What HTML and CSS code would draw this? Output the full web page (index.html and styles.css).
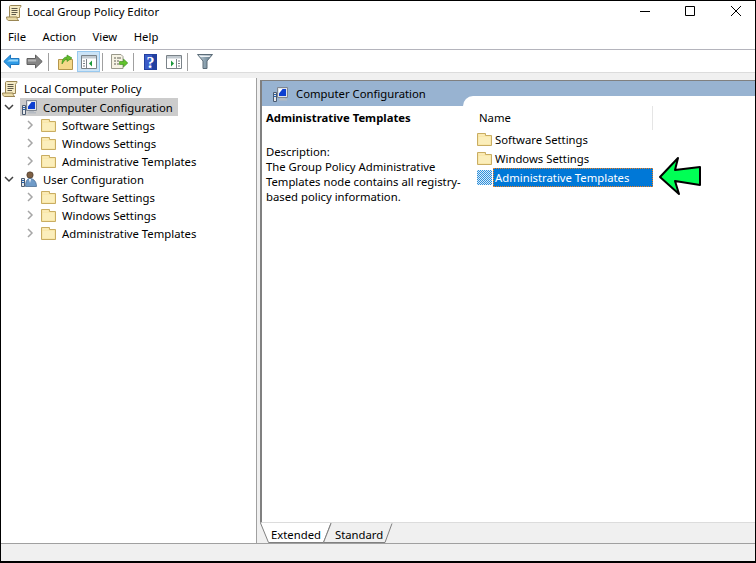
FILE: index.html
```html
<!DOCTYPE html>
<html lang="en">
<head>
<meta charset="utf-8">
<title>Local Group Policy Editor</title>
<link rel="stylesheet" href="styles.css">
</head>
<body>
<svg class="defs" width="0" height="0" aria-hidden="true">
  <defs>
    <linearGradient id="filter-grad" x1="0" y1="0" x2="1" y2="0">
      <stop offset="0" stop-color="#c8d4dc"/>
      <stop offset=".5" stop-color="#8aa0ae"/>
      <stop offset="1" stop-color="#5f7686"/>
    </linearGradient>
    <symbol id="folder" viewBox="0 0 15 15">
      <path d="M.5 13.500V1.500H8.500V3.500H14.500V13.500Z" fill="#f8e29c" stroke="#c9ad62"/>
      <path d="M1.500 4.500H13.500V12.500H1.500Z" fill="#fbeebb"/>
      <path d="M1.500 2.500H7.500V3.500H1.500Z" fill="#fdf3cc"/>
    </symbol>
    <symbol id="scroll" viewBox="0 0 16 16">
      <path d="M4.500 .5H15C15 2.500 13.500 2.500 13.500 3.500V12.500H3.500V1.500C3.500 1 4 .5 4.500 .5Z" fill="#f6ebc4" stroke="#9a8654"/>
      <path d="M.5 12H11C11 14 12 15.500 13 15.500H2.500C1.500 15.500 .5 14 .5 12Z" fill="#eadba6" stroke="#9a8654"/>
      <path d="M5.500 3.500H11.500M5.500 5.500H11.500M5.500 7.500H11.500M5.500 9.500H10" stroke="#5f5a4a"/>
    </symbol>
    <symbol id="computer" viewBox="0 0 16 16">
      <path d="M5.500 1.500H15.500V11.500H5.500Z" fill="#dfe3e8" stroke="#7f8690"/>
      <path d="M7 3H14V10H7Z" fill="#0d3fd0"/>
      <path d="M7 3H10.500L7 7.500Z" fill="#fff"/>
      <path d="M8 12H13V13H15V14.500H7V13H8Z" fill="#b4bac2"/>
      <path d="M1.500 6.500H4.500V15.500H1.500Z" fill="#e6e9ec" stroke="#4a5a70"/>
      <path d="M2 8.500H4M2 10.500H4" stroke="#1e5fb0"/>
    </symbol>
    <symbol id="user" viewBox="0 0 16 16">
      <circle cx="9" cy="4" r="3.200" fill="#7d5f44" stroke="#3f3226" stroke-width=".6"/>
      <path d="M4.500 15.500C4.500 9.500 6.500 7.500 9 7.500S15.500 9.500 15.500 15.500Z" fill="#6f9bc8" stroke="#3f6288" stroke-width=".7"/>
      <path d="M8 8L9 12L10 8Z" fill="#fff"/>
      <path d="M.5 7.500H3.500V15.500H.5Z" fill="#e6e9ec" stroke="#4a5a70"/>
      <path d="M1 9.500H3M1 11.500H3" stroke="#1e5fb0"/>
    </symbol>
    <symbol id="chev-down" viewBox="0 0 10 10">
      <path d="M1 3L5 7L9 3" fill="none" stroke="#404040" stroke-width="1.500"/>
    </symbol>
    <symbol id="chev-right" viewBox="0 0 10 10">
      <path d="M3 1L7 5L3 9" fill="none" stroke="#a6a6a6" stroke-width="1.500"/>
    </symbol>
    <pattern id="dither" width="2" height="2" patternUnits="userSpaceOnUse">
      <rect width="2" height="2" fill="#2f8fdc"/>
      <rect width="1" height="1" fill="#d8ecf8"/>
      <rect x="1" y="1" width="1" height="1" fill="#d8ecf8"/>
    </pattern>
  </defs>
</svg>

<div class="window">
  <header class="titlebar">
    <svg class="icon16" width="16" height="16"><use href="#scroll"/></svg>
    <span class="title-text">Local Group Policy Editor</span>
    <div class="win-controls">
      <svg width="46" height="22" viewBox="0 0 46 22"><path d="M19 10.500H29" stroke="#000"/></svg>
      <svg width="46" height="22" viewBox="0 0 46 22"><path d="M18.500 5.500H27.500V14.500H18.500Z" fill="none" stroke="#000"/></svg>
      <svg width="42" height="22" viewBox="0 0 42 22"><path d="M18 5L28 15M28 5L18 15" stroke="#000"/></svg>
    </div>
  </header>

  <nav class="menubar">
    <span class="menu-item">File</span>
    <span class="menu-item">Action</span>
    <span class="menu-item">View</span>
    <span class="menu-item">Help</span>
  </nav>

  <div class="toolbar">
    <span class="tool tool-first">
      <svg width="17" height="15" viewBox="0 0 17 15"><path d="M.8 7.500L7.500 1V4.500H16V10.500H7.500V14Z" fill="#2f9be6" stroke="#1f78c0"/><path d="M7 5.500H15V7.500H4Z" fill="#9ad8fa"/></svg>
    </span>
    <span class="tool tool-second">
      <svg width="17" height="15" viewBox="0 0 17 15"><path d="M16.200 7.500L9.500 1V4.500H1V10.500H9.500V14Z" fill="#858585" stroke="#606060"/><path d="M2 5.500H10V7.500H2Z" fill="#b4b4b4"/></svg>
    </span>
    <span class="tool-sep"></span>
    <span class="tool">
      <svg width="15" height="16" viewBox="0 0 15 16"><path d="M.5 15.500V5.500H14.500V15.500Z" fill="#f5d98a" stroke="#b4964c"/><path d="M4 10C4 5 6 3 9 3V1L14 4L9 7.500V5C7.500 5 6 7 4 10Z" fill="#62bc2c" stroke="#3a8a1c" stroke-width=".6"/></svg>
    </span>
    <span class="tool tool-active">
      <svg width="16" height="14" viewBox="0 0 16 14"><path d="M.5.500H15.500V13.500H.5Z" fill="#fff" stroke="#7a8288"/><path d="M1 1H15V3.500H1Z" fill="#c2cad0"/><path d="M5.500 4V13" stroke="#7a8288"/><path d="M2 6H4M2 8.500H4M2 11H4" stroke="#7a8288"/><path d="M11 5.500V11.500L8 8.500Z" fill="#1c9a3c"/></svg>
    </span>
    <span class="tool-sep"></span>
    <span class="tool">
      <svg width="17" height="15" viewBox="0 0 17 15"><path d="M.5.500H10L12 2.500V14.500H.5Z" fill="#f6f3e4" stroke="#9a9a8c"/><path d="M3 4H5M6 4H10M3 7H5M6 7H8M3 10H5M6 10H8" stroke="#5f5f55"/><path d="M8.500 7.500H12.500V5L16.800 9L12.500 13V10.500H8.500Z" fill="#62c42c" stroke="#3a8a1c" stroke-width=".6"/></svg>
    </span>
    <span class="tool-sep"></span>
    <span class="tool">
      <svg width="13" height="16" viewBox="0 0 13 16"><path d="M0 0H13V16H0Z" fill="#22409f"/><path d="M1 1H8V15H1Z" fill="#3a5cc8"/><text class="help-glyph" x="6.500" y="13.500" text-anchor="middle">?</text></svg>
    </span>
    <span class="tool">
      <svg width="16" height="14" viewBox="0 0 16 14"><path d="M.5.500H15.500V13.500H.5Z" fill="#fff" stroke="#7a8288"/><path d="M1 1H15V3.500H1Z" fill="#c2cad0"/><path d="M10.500 4V13" stroke="#7a8288"/><path d="M12 6H14M12 8.500H14M12 11H14" stroke="#7a8288"/><path d="M5 5.500V11.500L8 8.500Z" fill="#1c9a3c"/></svg>
    </span>
    <span class="tool-sep"></span>
    <span class="tool">
      <svg width="16" height="15" viewBox="0 0 16 15"><path d="M.5.500H15.500L10 7V14.500H6V7Z" fill="url(#filter-grad)" stroke="#5c6c78"/><path d="M2 1.500H14L12.500 3H3.500Z" fill="#eef2f5"/></svg>
    </span>
  </div>

  <main class="panes">
    <aside class="tree">
      <div class="tree-row">
        <svg class="root-icon" width="16" height="16"><use href="#scroll"/></svg>
        <span class="root-label">Local Computer Policy</span>
      </div>
      <div class="tree-row lvl1">
        <svg class="chev" width="10" height="10"><use href="#chev-down"/></svg>
        <span class="node node-selected">
          <svg width="16" height="16"><use href="#computer"/></svg>
          <span>Computer Configuration</span>
        </span>
      </div>
      <div class="tree-row lvl2"><svg class="chev" width="10" height="10"><use href="#chev-right"/></svg><svg class="folder" width="15" height="15"><use href="#folder"/></svg><span>Software Settings</span></div>
      <div class="tree-row lvl2"><svg class="chev" width="10" height="10"><use href="#chev-right"/></svg><svg class="folder" width="15" height="15"><use href="#folder"/></svg><span>Windows Settings</span></div>
      <div class="tree-row lvl2"><svg class="chev" width="10" height="10"><use href="#chev-right"/></svg><svg class="folder" width="15" height="15"><use href="#folder"/></svg><span>Administrative Templates</span></div>
      <div class="tree-row lvl1">
        <svg class="chev" width="10" height="10"><use href="#chev-down"/></svg>
        <span class="node">
          <svg width="16" height="16"><use href="#user"/></svg>
          <span>User Configuration</span>
        </span>
      </div>
      <div class="tree-row lvl2"><svg class="chev" width="10" height="10"><use href="#chev-right"/></svg><svg class="folder" width="15" height="15"><use href="#folder"/></svg><span>Software Settings</span></div>
      <div class="tree-row lvl2"><svg class="chev" width="10" height="10"><use href="#chev-right"/></svg><svg class="folder" width="15" height="15"><use href="#folder"/></svg><span>Windows Settings</span></div>
      <div class="tree-row lvl2"><svg class="chev" width="10" height="10"><use href="#chev-right"/></svg><svg class="folder" width="15" height="15"><use href="#folder"/></svg><span>Administrative Templates</span></div>
    </aside>

    <section class="detail">
      <div class="detail-body">
        <div class="detail-left">
          <div class="band">
            <svg width="16" height="16"><use href="#computer"/></svg>
            <span>Computer Configuration</span>
          </div>
          <div class="desc">
            <h2 class="desc-title">Administrative Templates</h2>
            <p class="desc-text">Description:<br>The Group Policy Administrative<br>Templates node contains all registry-<br>based policy information.</p>
          </div>
        </div>
        <div class="detail-list">
          <div class="col-head"><span class="col-name">Name</span></div>
          <div class="list-row"><svg width="15" height="15"><use href="#folder"/></svg><span class="list-label">Software Settings</span></div>
          <div class="list-row"><svg width="15" height="15"><use href="#folder"/></svg><span class="list-label">Windows Settings</span></div>
          <div class="list-row"><svg width="15" height="15"><rect width="15" height="15" fill="url(#dither)"/></svg><span class="list-label list-selected">Administrative Templates</span></div>
        </div>
      </div>
      <div class="tabs">
        <svg class="tab-shape" width="140" height="21" viewBox="0 0 140 21">
          <path d="M.5 0L8.500 19.500H63.500L71 0" fill="#fff" stroke="#808080"/>
          <path d="M71 .5L63.500 19.500H125L132 .5" fill="#f0f0f0" stroke="#808080"/>
        </svg>
        <span class="tab tab-ext">Extended</span>
        <span class="tab tab-std">Standard</span>
      </div>
    </section>
  </main>

  <footer class="statusbar"></footer>

  <svg class="callout" width="44" height="40" viewBox="0 0 44 40">
    <path d="M2 21L20 2L17 14L42 11V29L17 25L21 38Z" fill="#00ff55" stroke="#000" stroke-width="2" stroke-linejoin="round"/>
  </svg>
</div>
</body>
</html>
```
FILE: styles.css
```css
* { box-sizing: border-box; }
html, body { margin: 0; padding: 0; }
body {
  width: 756px;
  height: 563px;
  overflow: hidden;
  font-family: "Noto Sans", "Open Sans", sans-serif;
  font-size: 11.3px;
  color: #000;
  background: #fff;
}
.defs { position: absolute; }
svg { display: block; flex: none; }

.window {
  position: relative;
  display: flex;
  flex-direction: column;
  width: 756px;
  height: 563px;
  border: 1px solid #000;
  border-bottom-width: 2px;
  background: #f0f0f0;
}

.titlebar {
  display: flex;
  align-items: center;
  height: 23px;
  padding-left: 5px;
  background: #fff;
}
.title-text { margin: -2px 0 0 5px; }
.win-controls { display: flex; align-self: flex-start; margin-left: auto; }

.menubar {
  display: flex;
  align-items: center;
  height: 26px;
  padding: 0 0 0 7px;
  gap: 16.5px;
  background: #fff;
  border-bottom: 1px solid #b4b4bc;
}

.toolbar {
  display: flex;
  align-items: center;
  height: 23px;
  padding-top: 1px;
  background: #fff;
  border-bottom: 1px solid #dcdcdc;
}
.tool {
  display: flex;
  align-items: center;
  justify-content: center;
  width: 23px;
  height: 21px;
}
.tool-first { width: 21px; }
.tool-second { width: 24px; }
.tool-active {
  background: #cce4f7;
  border: 1px solid #99c9ef;
}
.tool-sep {
  width: 1px;
  height: 18px;
  margin: 0 5px 0 2px;
  background: #a0a0a0;
}
.help-glyph {
  font-family: "Liberation Serif", serif;
  font-size: 16px;
  font-weight: 700;
  fill: #fff;
}

.panes {
  display: flex;
  flex: 1;
  min-height: 0;
  padding-top: 5px;
}

.tree {
  width: 256px;
  padding-top: 2px;
  background: #fff;
  border-right: 1px solid #a0a0a0;
  border-bottom: 1px solid #a0a0a0;
}
.tree-row {
  display: flex;
  align-items: center;
  height: 18px;
  white-space: nowrap;
}
.root-icon { margin: 0 6px 0 1px; }
.root-label { margin-top: -2px; }
.lvl1 { padding-left: 3px; }
.lvl1 .chev { margin-right: 6px; }
.node {
  display: flex;
  align-items: center;
  gap: 6px;
  width: 158px;
  height: 18px;
  padding-left: 1px;
}
.node-selected { background: #cccccc; }
.lvl2 { padding-left: 24px; }
.lvl2 .chev { margin-right: 6px; }
.lvl2 .folder { margin-right: 6px; }

.detail {
  display: flex;
  flex-direction: column;
  flex: 1;
  min-width: 0;
  margin: 2px 0 0 3px;
}
.detail-body {
  display: flex;
  flex: 1;
  min-height: 0;
  background: #98b3d1;
  border-left: 2px solid #808080;
  border-top: 1px solid #808080;
  border-bottom: 1px solid #dcdcdc;
}
.detail-left {
  display: flex;
  flex-direction: column;
  width: 201px;
}
.band {
  display: flex;
  align-items: center;
  gap: 8px;
  height: 25px;
  padding-left: 10px;
  white-space: nowrap;
}
.desc {
  flex: 1;
  padding: 4px 0 0 4px;
  background: #fff;
}
.desc-title {
  margin: 0;
  height: 16px;
  font-size: 11.3px;
  line-height: 16px;
  font-weight: 700;
}
.desc-text {
  margin: 18px 0 0;
  line-height: 15px;
  white-space: nowrap;
}
.detail-list {
  flex: 1;
  margin-top: 15px;
  background: #fff;
  border-top-left-radius: 10px;
}
.col-head {
  display: flex;
  align-items: center;
  width: 190px;
  height: 24px;
  margin-top: 10px;
  padding: 0 0 2px 16px;
  border-right: 1px solid #e5e5e5;
}
.list-row {
  display: flex;
  align-items: center;
  height: 19px;
  padding-left: 14px;
  gap: 1px;
}
.list-label {
  display: block;
  width: 160px;
  height: 19px;
  padding-left: 1px;
  line-height: 17px;
  border: 1px solid transparent;
  white-space: nowrap;
}
.list-selected {
  color: #fff;
  background: #0078d7;
  border: 1px dotted #f08020;
}

.tabs {
  position: relative;
  display: flex;
  flex: none;
  height: 21px;
}
.tab-shape { position: absolute; left: 0; top: 0; }
.tab { position: relative; line-height: 23px; }
.tab-ext { margin-left: 11px; }
.tab-std { margin-left: 14px; }

.statusbar {
  flex: none;
  height: 18px;
  background: #f0f0f0;
  border-top: 1px solid #a0a0a0;
  margin-top: -1px;
}

.callout {
  position: absolute;
  left: 657px;
  top: 155px;
}
```
